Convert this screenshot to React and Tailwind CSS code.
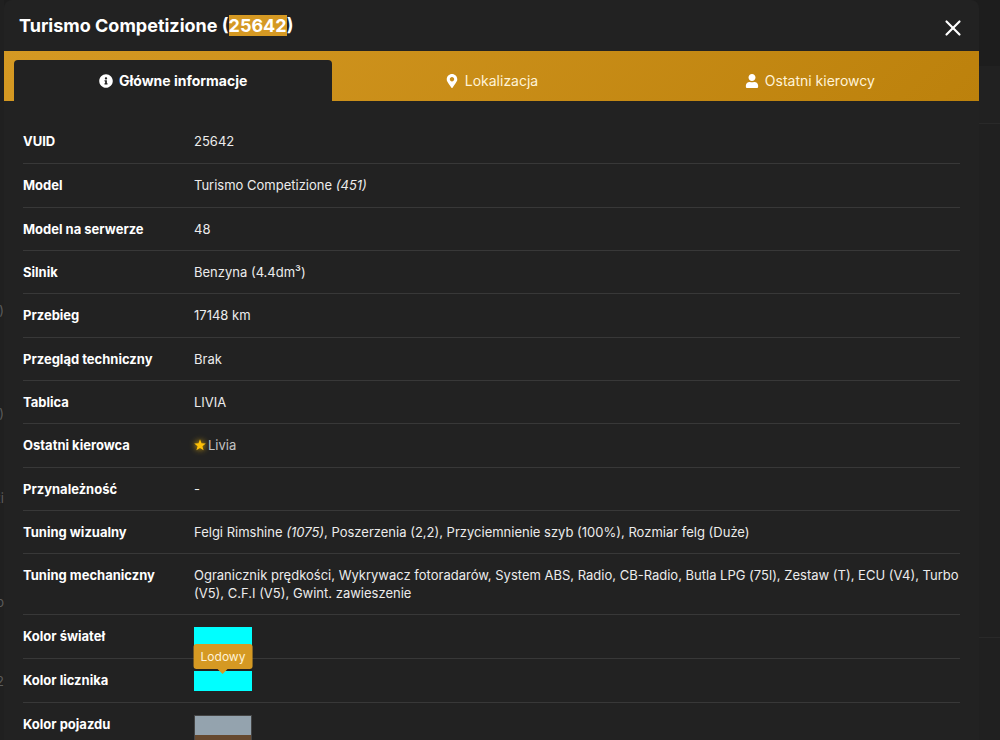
import { FaInfoCircle, FaMapMarkerAlt, FaUser } from "react-icons/fa";
import { FiX } from "react-icons/fi";

function Star() {
  return (
    <svg
      viewBox="0 0 24 24"
      fill="currentColor"
      aria-hidden="true"
      className="size-[12px] text-[#ffc107] drop-shadow-[0_0_3px_#ffc107]"
    >
      <path d="M12 0.5 15 8.6 23.6 9 16.9 14.3 19.2 22.6 12 17.8 4.8 22.6 7.1 14.3 0.4 9 9 8.6Z" />
    </svg>
  );
}

function Swatch({ className, label, children }) {
  return (
    <div className="relative h-[19px] w-[58px]">
      <div role="img" aria-label={label} className={"w-full " + className} />
      {children}
    </div>
  );
}

const rows = [
  ["VUID", "25642"],
  ["Model", <>Turismo Competizione <em>(451)</em></>],
  ["Model na serwerze", "48"],
  ["Silnik", "Benzyna (4.4dm³)"],
  ["Przebieg", "17148 km"],
  ["Przegląd techniczny", "Brak"],
  ["Tablica", "LIVIA"],
  [
    "Ostatni kierowca",
    <a href="#livia" className="flex items-center gap-[2px] text-[#c4c4c4]">
      <Star />
      Livia
    </a>,
  ],
  ["Przynależność", "-"],
  [
    "Tuning wizualny",
    <>Felgi Rimshine <em>(1075)</em>, Poszerzenia (2,2), Przyciemnienie szyb (100%), Rozmiar felg (Duże)</>,
  ],
  [
    "Tuning mechaniczny",
    "Ogranicznik prędkości, Wykrywacz fotoradarów, System ABS, Radio, CB-Radio, Butla LPG (75l), Zestaw (T), ECU (V4), Turbo (V5), C.F.I (V5), Gwint. zawieszenie",
  ],
  ["Kolor świateł", <Swatch label="Lodowy" className="h-5 bg-[#00ffff]" />],
  [
    "Kolor licznika",
    <Swatch label="Lodowy" className="h-5 bg-[#00ffff]">
      <div
        role="tooltip"
        className="absolute bottom-full left-1/2 mb-[2px] -translate-x-1/2 rounded-[3px] bg-[#d59923] px-[7px] py-1 text-[12px] leading-[17px] text-[#fff3d8]"
      >
        Lodowy
        <span className="absolute left-1/2 top-full -translate-x-1/2 border-x-[5px] border-t-[5px] border-x-transparent border-t-[#d59923]" />
      </div>
    </Swatch>,
  ],
  [
    "Kolor pojazdu",
    <Swatch
      label="Kolor pojazdu"
      className="h-10 border border-[#444] bg-linear-to-b from-[#94a3ae] from-50% to-[#66492f] to-50%"
    />,
  ],
];

const tabs = [
  { label: "Główne informacje", Icon: FaInfoCircle, active: true },
  { label: "Lokalizacja", Icon: FaMapMarkerAlt },
  { label: "Ostatni kierowcy", Icon: FaUser },
];

export default function App() {
  return (
    <div className="grid h-screen grid-cols-[4px_minmax(0,1fr)_21px] overflow-hidden bg-[#1d1d1d] font-['Inter','Liberation_Sans',sans-serif] text-[13px] leading-[18px] text-[#ececec]">
      <div aria-hidden="true" className="flex flex-col items-end overflow-hidden bg-[#202020] pt-[301px] text-[#5c5c5c]">
        <span>)</span>
        <span className="mt-[85px]">)</span>
        <span className="mt-[67px]">zi</span>
        <span className="mt-[86px]">o</span>
        <span className="mt-[61px]">2</span>
      </div>

      <main className="min-w-0 overflow-hidden rounded-t-lg bg-[#222222]">
        <header className="flex h-[51px] items-center justify-between pr-[13px] pl-[15px]">
          <h1 className="text-[18px] leading-[22px] font-bold text-white">
            Turismo Competizione (<mark className="bg-[#d59923] text-white">25642</mark>)
          </h1>
          <button type="button" aria-label="Zamknij" className="mt-1 text-white">
            <FiX className="size-[26px]" />
          </button>
        </header>

        <nav
          role="tablist"
          className="grid h-[50px] grid-cols-3 bg-linear-[135deg,#d59923,#bc810c] px-[10px] pt-[9px]"
        >
          {tabs.map(({ label, Icon, active }) => (
            <button
              key={label}
              type="button"
              role="tab"
              aria-selected={!!active}
              className={
                "flex items-center justify-center gap-[6px] rounded-t-[4px] text-[14px] " +
                (active ? "bg-[#222222] font-bold text-white" : "text-[#fff3d8]")
              }
            >
              <Icon className="size-[14px] text-white" />
              {label}
            </button>
          ))}
        </nav>

        <div className="px-[19px] pt-[19px]">
          <table className="w-full border-collapse text-left">
            <tbody>
              {rows.map(([name, value]) => (
                <tr key={name} className="h-[43px] border-b border-[#383838] align-top nth-[3n+2]:h-[44px]">
                  <th scope="row" className="w-[171px] py-3 pr-3 font-bold text-white">{name}</th>
                  <td className="py-3">{value}</td>
                </tr>
              ))}
            </tbody>
          </table>
        </div>
      </main>

      <div aria-hidden="true" className="pt-[66px]">
        <div className="h-[58px] border-b border-[#292929] bg-[#212121]" />
        <div className="h-[514px] border-b border-[#292929] bg-[#202020]" />
        <div className="h-[102px] bg-[#202020]" />
      </div>
    </div>
  );
}
